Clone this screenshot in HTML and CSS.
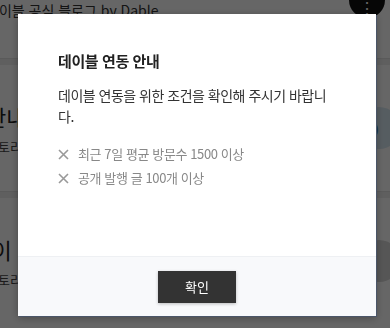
FILE: index.html
```html
<!DOCTYPE html>
<html lang="ko">
<head>
    <meta charset="UTF-8">
    <title>데이블 연동 안내</title>
    <link rel="stylesheet" href="styles.css">
</head>
<body>
    <div class="page">
        <div class="blog-bar">
            <span class="blog-name">데이블 공식 블로그 by Dable</span>
            <span class="menu-dot">⋮</span>
        </div>
        <div class="divider"></div>
        <div class="post">
            <div class="post-text">
                <div class="post-title">안내</div>
                <div class="post-sub">스토리</div>
            </div>
            <div class="avatar avatar-d">D</div>
        </div>
        <div class="divider"></div>
        <div class="post">
            <div class="post-text">
                <div class="post-title"><span class="caret">|</span>이</div>
                <div class="post-sub">스토리</div>
            </div>
            <div class="avatar avatar-t">T</div>
        </div>
    </div>

    <div class="overlay"></div>

    <div class="modal">
        <div class="modal-body">
            <h2 class="modal-title">데이블 연동 안내</h2>
            <p class="modal-text">데이블 연동을 위한 조건을 확인해 주시기 바랍니다.</p>
            <ul class="conditions">
                <li>
                    <svg class="x-icon" width="11" height="11" viewBox="0 0 11 11">
                        <path d="M1 1 L10 10 M10 1 L1 10" stroke="#999" stroke-width="1.6" fill="none"/>
                    </svg>
                    최근 7일 평균 방문수 1500 이상
                </li>
                <li>
                    <svg class="x-icon" width="11" height="11" viewBox="0 0 11 11">
                        <path d="M1 1 L10 10 M10 1 L1 10" stroke="#999" stroke-width="1.6" fill="none"/>
                    </svg>
                    공개 발행 글 100개 이상
                </li>
            </ul>
        </div>
        <div class="modal-footer">
            <button class="confirm-button">확인</button>
        </div>
    </div>
</body>
</html>
```

FILE: styles.css
```css
html, body {
    margin: 0;
    height: 100%;
    overflow: hidden;
}
body {
    background: #fff;
    font-family: "Noto Sans CJK KR", "Noto Sans", sans-serif;
    color: #333;
}
.page {
    margin-left: -14px;
    width: 420px;
}
.blog-bar {
    height: 58px;
    display: flex;
    justify-content: space-between;
    border-right: 1px solid #ddd;
}
.blog-name {
    font-size: 14px;
    line-height: 20px;
    margin-top: 0;
}
.menu-dot {
    width: 36px;
    height: 36px;
    margin-top: -18px;
    margin-right: 20px;
    border-radius: 50%;
    background: #111;
    color: #fff;
    font-size: 16px;
    text-align: center;
    line-height: 50px;
}
.divider {
    height: 6px;
    background: #eee;
    border-top: 1px solid #e2e2e2;
}
.post {
    height: 126px;
    display: flex;
    justify-content: space-between;
    align-items: center;
}
.post-title {
    font-size: 22px;
    line-height: 30px;
    color: #222;
}
.post-sub {
    font-size: 13px;
    margin-top: 6px;
    color: #444;
}
.caret {
    color: #3a8ed8;
    font-weight: 300;
}
.avatar {
    width: 42px;
    height: 42px;
    border-radius: 50%;
    margin-right: 6px;
    font-size: 22px;
    line-height: 42px;
    text-indent: 6px;
}
.avatar-d {
    background: #d8e8f2;
    color: #3f78a8;
}
.avatar-t {
    background: #d6d6d6;
    color: #333;
}
.overlay {
    position: fixed;
    inset: 0;
    background: rgba(0, 0, 0, 0.6);
}
.modal {
    position: fixed;
    top: 14px;
    left: 18px;
    width: 358px;
    height: 302px;
    background: #fff;
    box-shadow: 1px 1px 0 #4a5568, 0 2px 8px rgba(0, 0, 0, 0.3);
    display: flex;
    flex-direction: column;
}
.modal-body {
    flex: 1;
    padding: 36px 40px 0;
}
.modal-title {
    margin: 0;
    font-size: 15px;
    font-weight: 700;
    line-height: 22px;
    color: #222;
    letter-spacing: -0.4px;
}
.modal-text {
    margin: 13px 0 0;
    font-size: 14px;
    line-height: 21px;
    color: #333;
    letter-spacing: -0.5px;
}
.conditions {
    list-style: none;
    margin: 15px 0 0;
    padding: 0;
}
.conditions li {
    display: flex;
    align-items: center;
    gap: 9px;
    font-size: 13px;
    line-height: 24px;
    color: #888;
    letter-spacing: -0.4px;
}
.x-icon {
    flex-shrink: 0;
}
.modal-footer {
    height: 59px;
    background: #f8f9fb;
    border-top: 1px solid #eef0f3;
    display: flex;
    justify-content: center;
    align-items: center;
}
.confirm-button {
    width: 78px;
    height: 32px;
    border: none;
    background: #333;
    color: #fff;
    font-family: inherit;
    font-size: 13px;
    box-shadow: 0 1px 3px rgba(0, 0, 0, 0.25);
    cursor: pointer;
}
```
